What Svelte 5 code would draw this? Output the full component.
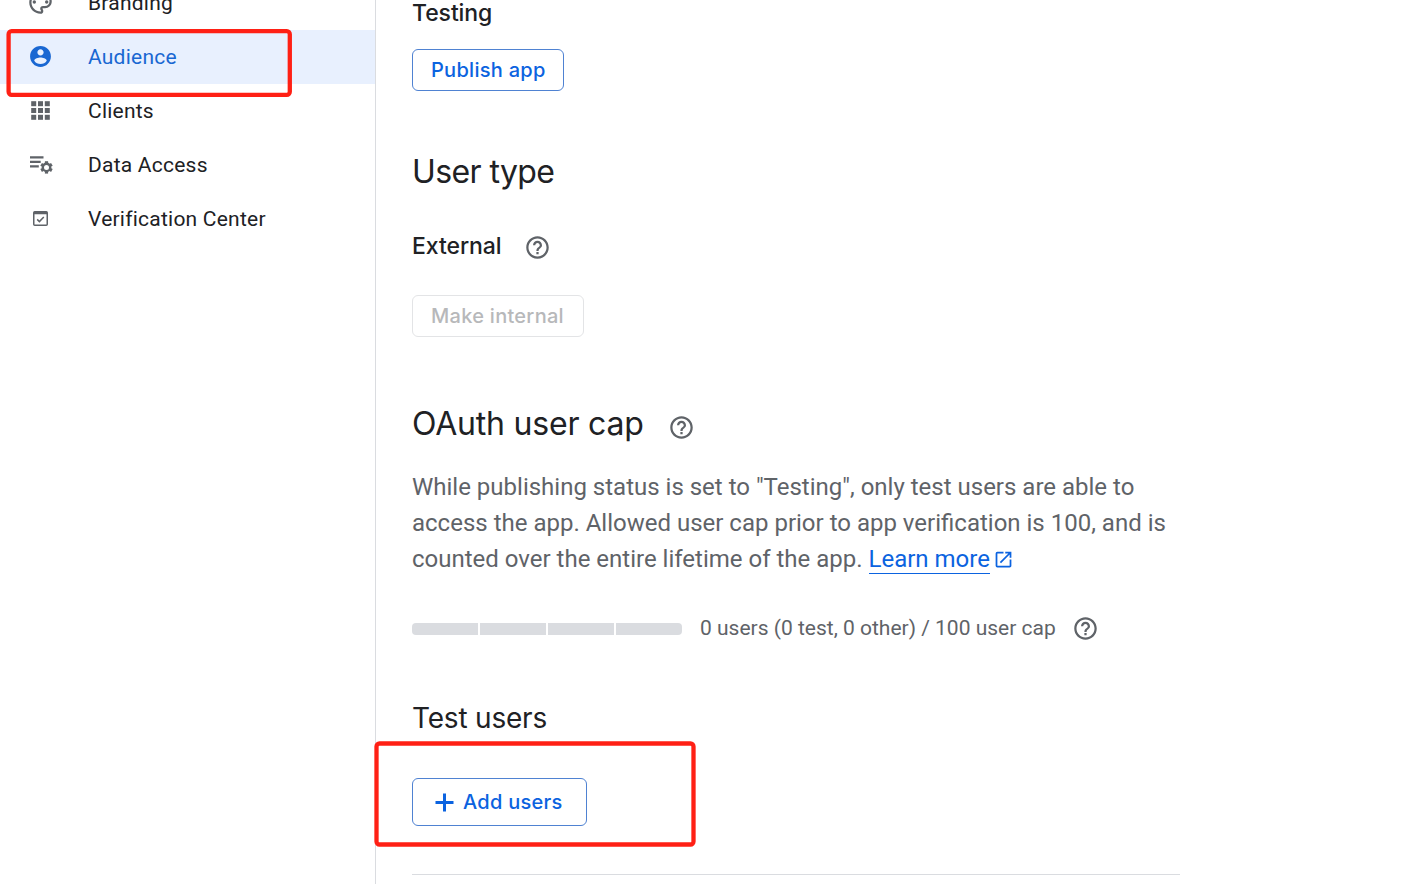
<script>
  const nav = [
    { id: 'branding', label: 'Branding' },
    { id: 'audience', label: 'Audience', active: true },
    { id: 'clients', label: 'Clients' },
    { id: 'data', label: 'Data Access' },
    { id: 'verification', label: 'Verification Center' }
  ];
  const segments = [0, 1, 2, 3];
  const teeth = [0, 60, 120, 180, 240, 300];
</script>

{#snippet help()}
  <svg class="help" viewBox="0 0 24 24" width="27" height="27" fill="currentColor">
    <path d="M11 18h2v-2h-2v2zm1-16C6.480 2 2 6.480 2 12s4.480 10 10 10 10-4.480 10-10S17.520 2 12 2zm0 18c-4.410 0-8-3.590-8-8s3.590-8 8-8 8 3.590 8 8-3.590 8-8 8zm0-14c-2.210 0-4 1.790-4 4h2c0-1.100.9-2 2-2s2 .9 2 2c0 2-3 1.750-3 5h2c0-2.250 3-2.500 3-5 0-2.210-1.790-4-4-4z" />
  </svg>
{/snippet}

<div class="page">
  <nav class="side">
    {#each nav as item}
      <a class="item" class:active={item.active}>
        <span class="icon">
          {#if item.id === 'branding'}
            <svg viewBox="0 0 24 24" width="27" height="27" fill="currentColor">
              <path d="M12 22C6.490 22 2 17.510 2 12S6.490 2 12 2s10 4.040 10 9c0 3.310-2.690 6-6 6h-1.770c-.28 0-.5.22-.5.5 0 .12.05.23.13.33.41.47.64 1.060.64 1.670A2.500 2.500 0 0 1 12 22zm0-18c-4.410 0-8 3.590-8 8s3.590 8 8 8c.28 0 .5-.22.5-.5a.54.54 0 0 0-.14-.35c-.41-.46-.63-1.050-.63-1.650a2.500 2.500 0 0 1 2.500-2.500H16c2.210 0 4-1.790 4-4 0-3.860-3.590-7-8-7z" />
              <circle cx="6.5" cy="11.5" r="1.5" /><circle cx="9.5" cy="7.5" r="1.5" />
              <circle cx="14.5" cy="7.5" r="1.5" /><circle cx="17.5" cy="11.5" r="1.5" />
            </svg>
          {:else if item.id === 'audience'}
            <svg viewBox="0 0 24 24" width="25" height="25" fill="currentColor">
              <path d="M12 2C6.480 2 2 6.480 2 12s4.480 10 10 10 10-4.480 10-10S17.520 2 12 2zm0 3c1.660 0 3 1.340 3 3s-1.340 3-3 3-3-1.340-3-3 1.340-3 3-3zm0 14.200c-2.500 0-4.710-1.280-6-3.220.03-1.990 4-3.080 6-3.080 1.990 0 5.970 1.090 6 3.080-1.290 1.940-3.500 3.220-6 3.220z" />
            </svg>
          {:else if item.id === 'clients'}
            <svg viewBox="0 0 19 19" width="19" height="19" fill="currentColor">
              {#each [0.2, 7, 13.8] as y}
                {#each [0.2, 7, 13.8] as x}
                  <rect {x} {y} width="5" height="5" />
                {/each}
              {/each}
            </svg>
          {:else if item.id === 'data'}
            <svg viewBox="0 0 27 27" width="27" height="27" fill="none" stroke="currentColor">
              <path d="M3 6.300h13.500M3 10.800h10.700M3 15.300h8.800" stroke-width="2.200" />
              <circle cx="19.500" cy="16.400" r="3.700" stroke-width="2.400" />
              {#each teeth as angle}
                <path d="M19.500 12.400V10.200" stroke-width="3.200" transform="rotate({angle} 19.500 16.400)" />
              {/each}
            </svg>
          {:else}
            <svg viewBox="0 0 15 15" width="15" height="15" fill="none" stroke="currentColor">
              <rect x=".75" y=".75" width="13.500" height="13.500" rx="1" stroke-width="1.500" />
              <path d="M1 2h13" stroke-width="2.500" />
              <path d="M4.200 8.400l2.200 2.200 4.400-4.600" stroke-width="1.500" />
            </svg>
          {/if}
        </span>
        <span class="label">{item.label}</span>
      </a>
    {/each}
    <svg class="mark mark-nav" width="290" height="72" fill="none">
      <rect x="2.600" y="3.200" width="281.200" height="63.600" rx="3" />
    </svg>
  </nav>

  <main>
    <div class="sub status"><span>Testing</span></div>
    <button class="btn publish">Publish app</button>

    <h2 class="type-title">User type</h2>
    <div class="sub type"><span class="ext">External</span>{@render help()}</div>
    <button class="btn internal" disabled>Make internal</button>

    <div class="cap-title"><h2>OAuth user cap</h2>{@render help()}</div>
    <p>
      While publishing status is set to "Testing", only test users are able to<br />
      access the app. Allowed user cap prior to app verification is 100, and is<br />
      counted over the entire lifetime of the app. <a class="link">Learn more</a><svg class="open" viewBox="0 0 24 24" width="21" height="21" fill="currentColor"><path d="M19 19H5V5h7V3H5a2 2 0 0 0-2 2v14a2 2 0 0 0 2 2h14c1.100 0 2-.9 2-2v-7h-2v7zM14 3v2h3.590l-9.830 9.830 1.410 1.410L19 6.410V10h2V3h-7z" /></svg>
    </p>

    <div class="usage">
      <div class="bar">
        {#each segments as s}<i></i>{/each}
      </div>
      <span class="count">0 users (0 test, 0 other) / 100 user cap</span>
      {@render help()}
    </div>

    <h3>Test users</h3>
    <div class="add-wrap">
      <button class="btn add">
        <svg viewBox="0 0 19 19" width="19" height="19"><path d="M9.500 .5v18M.5 9.500h18" stroke="currentColor" stroke-width="3" /></svg>
        <span>Add users</span>
      </button>
      <svg class="mark mark-add" width="326" height="110" fill="none">
        <rect x="2.500" y="3.500" width="317" height="101" rx="3" />
      </svg>
    </div>
    <hr />
  </main>
</div>

<style>
  :global(body) { background: #fff; overflow: hidden; }
  .page {
    display: flex; width: 1401px; height: 884px; overflow: hidden;
    font-family: Roboto, "Liberation Sans", sans-serif; color: #202124;
  }
  svg { display: block; flex: none; }
  .side {
    position: relative; box-sizing: border-box; width: 376px; flex: none;
    border-right: 1px solid #dadce0;
  }
  .item {
    display: flex; align-items: center; height: 54px;
    font-size: 21px; letter-spacing: 0.23px; color: #202124;
  }
  .item:first-child { margin-top: -24px; }
  .item.active { background: #e8f0fe; color: #1967d2; }
  .icon { display: flex; justify-content: center; width: 81px; flex: none; color: #5f6368; padding-bottom: 1px; }
  .active .icon { color: #1967d2; }
  .label { padding-left: 7px; }
  .mark { position: absolute; stroke: #ff2015; stroke-width: 4.300px; pointer-events: none; z-index: 2; }
  .mark-nav { left: 6px; top: 28px; }
  .mark-add { left: -38px; top: -38px; }
  main { flex: 1; padding-left: 36px; display: flex; flex-direction: column; align-items: flex-start; }
  h2, h3, p { margin: 0; }
  h2, h3, .sub, .btn { font-family: Inter, "Liberation Sans", sans-serif; }
  h2 { font-size: 32px; line-height: 48px; font-weight: 400; white-space: nowrap; letter-spacing: -0.2px; }
  .sub { display: flex; align-items: center; height: 36px; font-size: 23px; font-weight: 500; line-height: 36px; letter-spacing: -0.08px; }
  .status { margin-top: -5px; }
  .help { color: #5f6368; }
  .btn {
    box-sizing: border-box; height: 42px; padding: 0 0 0 18px; display: flex; align-items: center;
    background: #fff; border: 1px solid #4f82d2; border-radius: 6px; color: #0b63e0;
    font-size: 20px; font-weight: 500; letter-spacing: 0.28px; white-space: nowrap;
  }
  .publish { width: 152px; margin-top: 18px; }
  .type-title { margin-top: 57px; letter-spacing: -0.6px; }
  .type { margin-top: 33px; }
  .ext { width: 112px; padding-bottom: 2px; }
  .internal { width: 172px; margin-top: 30px; border-color: #e3e4e6; color: #b7b8ba; }
  .cap-title { display: flex; margin-top: 63px; }
  .cap-title h2 { width: 256px; }
  .cap-title :global(.help) { margin-top: 14px; }
  p { margin-top: 21px; font-size: 24px; line-height: 36px; color: #5f6368; white-space: nowrap; }
  .link { color: #0b63e0; border-bottom: 1px solid #0b63e0; }
  .open { display: inline-block; color: #0b63e0; margin-left: 3px; vertical-align: -3px; }
  .usage { display: flex; align-items: center; height: 36px; margin-top: 34px; font-size: 21px; color: #5f6368; }
  .usage :global(.help) { margin-bottom: 2px; }
  .bar { display: grid; grid-template-columns: repeat(4, 1fr); gap: 2px; width: 270px; height: 12px; border-radius: 4px; overflow: hidden; }
  .bar i { background: #dadce0; }
  .count { width: 390px; padding: 0 0 2px 18px; box-sizing: border-box; white-space: nowrap; }
  h3 { margin-top: 53px; font-size: 28px; line-height: 36px; font-weight: 400; letter-spacing: -0.2px; }
  .add-wrap { position: relative; margin-top: 42px; }
  .add { width: 175px; height: 48px; padding-left: 22px; gap: 9px; }
  hr { width: 768px; margin: 48px 0 0; border: 0; border-top: 1px solid #dadce0; }
</style>
